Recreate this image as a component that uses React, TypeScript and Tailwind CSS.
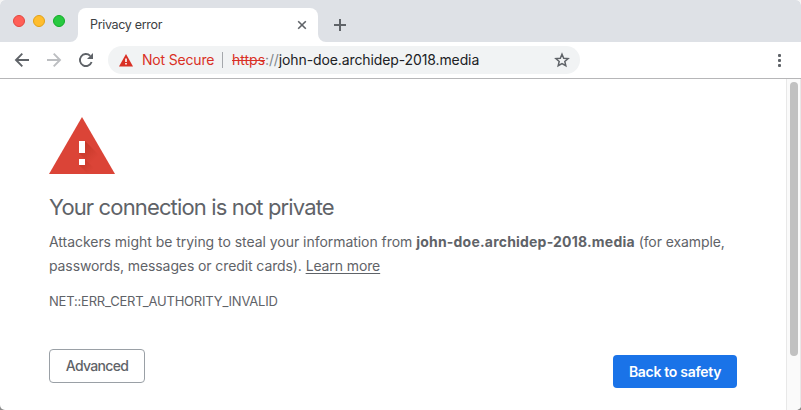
import React from "react";

function TabStrip() {
  return (
    <div className="flex h-[42px] items-end bg-[#dee1e6] rounded-t-[5px]">
      <div className="flex h-full w-[70px] gap-2 pl-[13px] pt-[15px]">
        <span className="size-3 rounded-full border border-[#e2463f] bg-[#ff5f57]" />
        <span className="size-3 rounded-full border border-[#e1a116] bg-[#ffbd2e]" />
        <span className="size-3 rounded-full border border-[#12ac28] bg-[#28c940]" />
      </div>
      <svg className="size-2" viewBox="0 0 8 8">
        <path d="M8 0v8H0a8 8 0 0 0 8-8z" fill="#fff" />
      </svg>
      <div className="flex h-[34px] w-[240px] items-center justify-between rounded-t-lg bg-white pl-3 pr-[11px]">
        <span className="text-[12.5px] leading-4 tracking-[-0.32px] text-[#3c4043]">Privacy error</span>
        <svg className="size-[10px]" viewBox="0 0 10 10" stroke="#5f6368" strokeWidth="1.6">
          <path d="M1.2 1.2l7.6 7.6M8.8 1.2L1.2 8.8" />
        </svg>
      </div>
      <svg className="size-2" viewBox="0 0 8 8">
        <path d="M0 0v8h8a8 8 0 0 1-8-8z" fill="#fff" />
      </svg>
      <svg className="mb-[11px] ml-[8px] size-3" viewBox="0 0 12 12" stroke="#5f6368" strokeWidth="2">
        <path d="M6 0v12M0 6h12" />
      </svg>
    </div>
  );
}

function Toolbar() {
  return (
    <div className="flex h-[37px] items-center border-b border-[#b6b6b8] bg-white pl-[14px]">
      <svg className="size-4" viewBox="0 0 16 16" fill="none" stroke="#5f6368" strokeWidth="1.9">
        <path d="M15 8H2.500M8.300 1.700L2 8l6.300 6.300" />
      </svg>
      <svg className="ml-4 size-4" viewBox="0 0 16 16" fill="none" stroke="#bcbec1" strokeWidth="1.9">
        <path d="M1 8h12.500M7.700 1.700L14 8l-6.300 6.300" />
      </svg>
      <svg className="ml-4 size-4" viewBox="0 0 16 16">
        <path d="M13.600 10A6 6 0 1 1 12.200 3.800" fill="none" stroke="#5f6368" strokeWidth="1.900" />
        <path d="M15 1v6H9z" fill="#5f6368" />
      </svg>
      <div className="ml-[14px] flex h-7 w-[472px] items-center rounded-full bg-[#f1f3f4] pl-[11px] pr-[10px] text-sm leading-5">
        <svg className="h-[13px] w-[14px]" viewBox="0 0 14 13">
          <path d="M7 0l7 12.500H0z" fill="#d93025" />
          <path d="M6.200 4.500h1.600v3.500H6.200zM6.200 9h1.600v1.500H6.200z" fill="#fff" />
        </svg>
        <span className="ml-[9px] w-[80px] whitespace-nowrap tracking-[-0.18px] text-[#d93025]">Not Secure</span>
        <span className="h-4 w-px bg-[#a5a8ac]" />
        <span className="ml-[9px] whitespace-nowrap text-[#202124]">
          <span className="text-[#d93025] line-through decoration-1">https</span>
          <span className="tracking-[-0.15px] text-[#80868b]">://</span>
          <span className="tracking-[-0.11px]">john-doe.archidep-2018.media</span>
        </span>
        <svg className="ml-auto size-4" viewBox="0 0 16 16" fill="none" stroke="#5f6368" strokeWidth="1.500">
          <path d="M8 2.200l1.700 4 4.400.4-3.300 2.900 1 4.200L8 11.500l-3.800 2.200 1-4.200L1.900 6.600l4.400-.4z" />
        </svg>
      </div>
      <div className="ml-auto mr-5 flex w-[3px] flex-col gap-[2px]">
        <span className="size-[3px] rounded-[1px] bg-[#5f6368]" />
        <span className="size-[3px] rounded-[1px] bg-[#5f6368]" />
        <span className="size-[3px] rounded-[1px] bg-[#5f6368]" />
      </div>
    </div>
  );
}

function Interstitial() {
  return (
    <main className="flex-1 pl-[49px] pt-[38px] text-[#5f6368]">
      <svg className="h-[57px] w-[66px]" viewBox="0 0 66 57">
        <defs>
          <linearGradient id="shade" x1="34" y1="30" x2="46" y2="42" gradientUnits="userSpaceOnUse">
            <stop offset="0" stopColor="#a52714" stopOpacity=".4" />
            <stop offset="1" stopColor="#a52714" stopOpacity="0" />
          </linearGradient>
          <linearGradient id="shadeDot" x1="32" y1="44" x2="42" y2="54" gradientUnits="userSpaceOnUse">
            <stop offset="0" stopColor="#a52714" stopOpacity=".4" />
            <stop offset="1" stopColor="#a52714" stopOpacity="0" />
          </linearGradient>
        </defs>
        <path d="M33 0l33 57H0z" fill="#db4437" />
        <path d="M36 24l16 16 10 17H51L30 36h6z" fill="url(#shade)" />
        <path d="M36 42l15 15H39l-9-9h6z" fill="url(#shadeDot)" />
        <path d="M30 24h6v12h-6zM30 42h6v6h-6z" fill="#fff" />
      </svg>
      <h1 className="mt-[18px] whitespace-nowrap text-[22px] leading-[30px] tracking-[-0.86px]">Your connection is not private</h1>
      <p className="mt-2 whitespace-nowrap text-sm leading-6">
        <span className="tracking-[-0.04px]">Attackers might be trying to steal your information from </span>
        <strong className="font-bold tracking-[0.2px]">john-doe.archidep-2018.media</strong>{" "}
        <span className="tracking-[-0.09px]">(for example,</span>
        <br />
        <span className="tracking-[-0.1px]">passwords, messages or credit cards). </span>
        <a className="tracking-[-0.11px] underline underline-offset-2">Learn more</a>
      </p>
      <div className="mt-[13px] text-[13px] leading-5 tracking-[-0.2px]">
        <span>NET::ERR_CERT_AUTHORITY_INVALID</span>
      </div>
      <div className="mt-[34px] flex w-[688px] items-start justify-between text-sm">
        <button className="mt-[4px] h-[34px] w-24 rounded border border-[#9aa0a6] font-medium tracking-[-0.7px]">Advanced</button>
        <button className="mt-[10px] h-[33px] w-[124px] whitespace-nowrap rounded bg-[#1a73e8] font-semibold tracking-[-0.3px] text-white">Back to safety</button>
      </div>
    </main>
  );
}

export default function App() {
  return (
    <div className="h-[410px] w-[801px] bg-[linear-gradient(#f5f5f5_50%,#8c8c8c_50%)]">
      <div className="flex h-full w-full flex-col overflow-hidden rounded-[5px] bg-white font-['Inter','Liberation_Sans',sans-serif]">
        <TabStrip />
        <Toolbar />
        <div className="flex min-h-0 flex-1">
          <Interstitial />
          <div className="flex w-[15px] justify-center border-x border-[#e8e8e8] bg-[#fafafa] pt-[3px]">
            <div className="h-[274px] w-2 rounded-full bg-[#c1c1c1]" />
          </div>
        </div>
      </div>
    </div>
  );
}
